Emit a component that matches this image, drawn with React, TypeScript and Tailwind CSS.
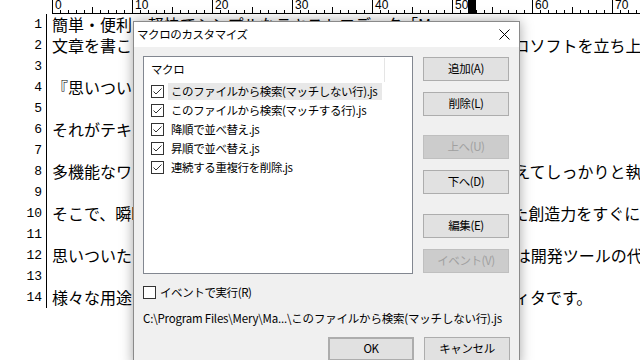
import React from 'react'
import clsx from 'clsx'

const LINES = [
  '簡単・便利・軽快でシンプルなテキストエディタ「Mery」',
  '文章を書こうと思い立ったとき、わざわざ大きくて重たいワープロソフトを立ち上げていませんか？',
  '',
  '『思いついたらすぐに書き留めたい』',
  '',
  'それがテキストエディタの役割です。',
  '',
  '多機能なワープロとは異なり、良い文章を書くことだけに腰を据えてしっかりと執筆できます。',
  '',
  'そこで、瞬時に起動して、ふと頭に浮かんだアイデアや湧いてきた創造力をすぐに形にできます。',
  '',
  '思いついたことをすぐに書き留められるメモ帳として、ある時には開発ツールの代わりとして。',
  '',
  '様々な用途で使う、簡単・便利・軽快でシンプルなテキストエディタです。',
]

const MACROS = [
  'このファイルから検索(マッチしない行).js',
  'このファイルから検索(マッチする行).js',
  '降順で並べ替え.js',
  '昇順で並べ替え.js',
  '連続する重複行を削除.js',
]

const Ruler = () => {
  const ticks = []
  for (let i = 1; i < 74; i++) {
    if (i % 10 === 0) continue
    const h = i % 5 === 0 ? 6 : 3
    ticks.push(<line key={i} x1={i * 8 + 0.5} x2={i * 8 + 0.5} y1={13 - h} y2={13} stroke="#000" strokeWidth={1} />)
  }
  return (
    <div className="flex h-[14px]">
      <div className="w-[52px] shrink-0" />
      <div className="relative flex flex-1 border-b border-black">
        {[0, 10, 20, 30, 40, 50, 60, 70].map((n) => (
          <div key={n} className="h-full w-[80px] shrink-0 border-l border-black pl-[2px] text-[12px] leading-[10px] font-['Liberation_Sans',sans-serif] text-black">
            {n}
          </div>
        ))}
        <svg className="absolute left-0 top-0" width="588" height="13">{ticks}</svg>
        <div className="absolute left-[416px] top-0 h-[14px] w-[8px] bg-black" />
      </div>
    </div>
  )
}

const Check = ({ checked }: { checked?: boolean }) => (
  <div className="h-[13px] w-[13px] shrink-0 border border-[#333] bg-white">
    {checked && (
      <svg width="11" height="11" viewBox="0 0 11 11">
        <path d="M1.5 5.5 L4 8 L9.5 2.5" fill="none" stroke="#333" strokeWidth="1" />
      </svg>
    )}
  </div>
)

const Btn = ({ label, disabled, className }: { label: string; disabled?: boolean; className?: string }) => (
  <div
    className={clsx(
      'flex h-[24px] w-[86px] shrink-0 items-center justify-center border',
      disabled ? 'border-[#bfbfbf] bg-[#cccccc] text-[#a0a0a0]' : 'border-[#adadad] bg-[#e1e1e1] text-black',
      className
    )}
  >
    {label}
  </div>
)

const Dialog = () => (
  <div className="absolute left-[133px] top-[21px] flex h-[345px] w-[387px] flex-col overflow-hidden border border-[#8a8a8a] bg-[#f0f0f0] font-['Noto_Sans_CJK_JP',sans-serif] text-[11.5px] tracking-[-0.4px] text-black shadow-[0_0_12px_rgba(0,0,0,0.35)]">
    <div className="flex h-[25px] shrink-0 items-center justify-between bg-white pl-[3px] pr-[9px]">
      <span>マクロのカスタマイズ</span>
      <svg width="11" height="11" viewBox="0 0 11 11">
        <path d="M0.5 0.5 L10.5 10.5 M10.5 0.5 L0.5 10.5" stroke="#000" strokeWidth="1" />
      </svg>
    </div>
    <div className="flex shrink-0 flex-col px-[9px] pt-[9px]">
      <div className="flex gap-[10px]">
        <div className="h-[218px] w-[270px] border border-[#828790] bg-white">
          <div className="flex h-[25px]">
            <div className="flex w-[240px] items-center pl-[7px]">マクロ</div>
            <div className="mt-[1px] h-[24px] w-px bg-[#e5e5e5]" />
          </div>
          {MACROS.map((m, i) => (
            <div key={m} className="flex h-[19px] items-center pl-[7px]">
              <Check checked />
              <span className={clsx('ml-[4px] flex h-[17px] items-center whitespace-nowrap px-[3px]', i === 0 && 'w-[214px] bg-[#e8e8e8]')}>{m}</span>
            </div>
          ))}
        </div>
        <div className="flex flex-col pt-[1px]">
          <Btn label="追加(A)" />
          <Btn label="削除(L)" className="mt-[11px]" />
          <Btn label="上へ(U)" disabled className="mt-[19px]" />
          <Btn label="下へ(D)" className="mt-[11px]" />
          <Btn label="編集(E)" className="mt-[20px]" />
          <Btn label="イベント(V)" disabled className="mt-[11px]" />
        </div>
      </div>
      <div className="mt-[12px] flex h-[13px] items-center gap-[4px]">
        <Check />
        <span>イベントで実行(R)</span>
      </div>
      <div className="mt-[11px] whitespace-nowrap leading-[16px] tracking-[-0.2px]">
        {'C:\\Program Files\\Mery\\Ma...\\このファイルから検索(マッチしない行).js'}
      </div>
      <div className="mt-[11px] flex justify-end gap-[10px]">
        <Btn label="OK" className="border-2 border-[#0078d7]" />
        <Btn label="キャンセル" />
      </div>
    </div>
  </div>
)

export default function App() {
  return (
    <div className="relative h-[360px] w-[640px] overflow-hidden bg-white">
      <Ruler />
      <div className="flex">
        <div className="w-[47px] shrink-0 border-r border-black pr-[4px] text-right font-['Liberation_Mono',monospace] text-[13px] leading-[21px] text-black">
          {LINES.map((_, i) => (
            <div key={i} className="h-[21px]">{i + 1}</div>
          ))}
        </div>
        <div className="pl-[5px] font-['Noto_Sans_CJK_JP',sans-serif] text-[16px] leading-[21px] text-black">
          {LINES.map((l, i) => (
            <div key={i} className="h-[21px] whitespace-nowrap">{l}</div>
          ))}
        </div>
      </div>
      <Dialog />
    </div>
  )
}
